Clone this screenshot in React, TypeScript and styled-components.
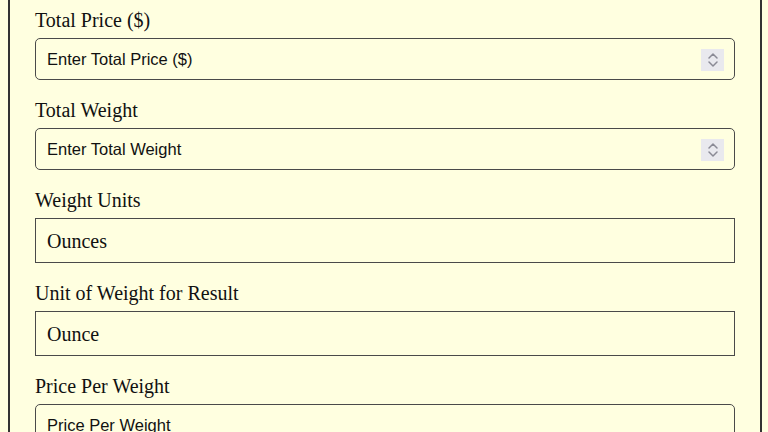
import React from 'react';
import styled, { createGlobalStyle } from 'styled-components';

const GlobalStyle = createGlobalStyle`
  html, body {
    margin: 0;
    padding: 0;
    background: #ffffe0;
  }
  body {
    padding: 0 8px;
    font-family: 'Liberation Serif', 'Times New Roman', serif;
  }
`;

const Panel = styled.div`
  box-sizing: border-box;
  width: 754px;
  border: 2px solid #333;
  border-top: none;
  padding: 9px 25px 20px;
  background: #ffffe0;
`;

const Group = styled.div`
  margin-bottom: 19px;
`;

const Label = styled.label`
  display: block;
  font-family: 'Liberation Serif', 'Times New Roman', serif;
  font-size: 20px;
  line-height: 22px;
  color: #111;
  margin-bottom: 7px;
`;

const InputBox = styled.div`
  box-sizing: border-box;
  display: flex;
  align-items: center;
  height: 42px;
  border: 1px solid #4a4a4a;
  border-radius: 5px;
  padding: 1px 10px 0 11px;
`;

const TextInput = styled.input`
  flex: 1;
  min-width: 0;
  border: none;
  outline: none;
  background: transparent;
  padding: 0;
  font-family: 'Liberation Sans', Arial, sans-serif;
  font-size: 16.5px;
  color: #000;
  &::placeholder {
    color: #111;
    opacity: 1;
  }
`;

const Spinner = styled.span`
  display: flex;
  align-items: center;
  justify-content: center;
  width: 23px;
  height: 22px;
  background: #e9e9ee;
`;

const Select = styled.select`
  box-sizing: border-box;
  display: block;
  width: 100%;
  height: 45px;
  appearance: none;
  border: 1px solid #4a4a4a;
  border-radius: 0;
  background: transparent;
  padding: 0 11px;
  font-family: 'Liberation Serif', 'Times New Roman', serif;
  font-size: 20px;
  color: #111;
  outline: none;
`;

const SpinIcon = () => (
  <svg width="12" height="18" viewBox="0 0 12 18" fill="none" stroke="#8a8a95" strokeWidth="1.5" strokeLinecap="round" strokeLinejoin="round">
    <path d="M2 7 L6 3 L10 7" />
    <path d="M2 11 L6 15 L10 11" />
  </svg>
);

const NumberField: React.FC<{ placeholder: string }> = ({ placeholder }) => (
  <InputBox>
    <TextInput type="text" inputMode="decimal" placeholder={placeholder} />
    <Spinner>
      <SpinIcon />
    </Spinner>
  </InputBox>
);

export default function App() {
  return (
    <>
      <GlobalStyle />
      <Panel>
        <Group>
          <Label>Total Price ($)</Label>
          <NumberField placeholder="Enter Total Price ($)" />
        </Group>
        <Group>
          <Label>Total Weight</Label>
          <NumberField placeholder="Enter Total Weight" />
        </Group>
        <Group>
          <Label>Weight Units</Label>
          <Select defaultValue="ounces">
            <option value="ounces">Ounces</option>
            <option value="pounds">Pounds</option>
            <option value="grams">Grams</option>
            <option value="kilograms">Kilograms</option>
          </Select>
        </Group>
        <Group>
          <Label>Unit of Weight for Result</Label>
          <Select defaultValue="ounce">
            <option value="ounce">Ounce</option>
            <option value="pound">Pound</option>
            <option value="gram">Gram</option>
            <option value="kilogram">Kilogram</option>
          </Select>
        </Group>
        <Group>
          <Label>Price Per Weight</Label>
          <InputBox>
            <TextInput type="text" readOnly placeholder="Price Per Weight" />
          </InputBox>
        </Group>
      </Panel>
    </>
  );
}
